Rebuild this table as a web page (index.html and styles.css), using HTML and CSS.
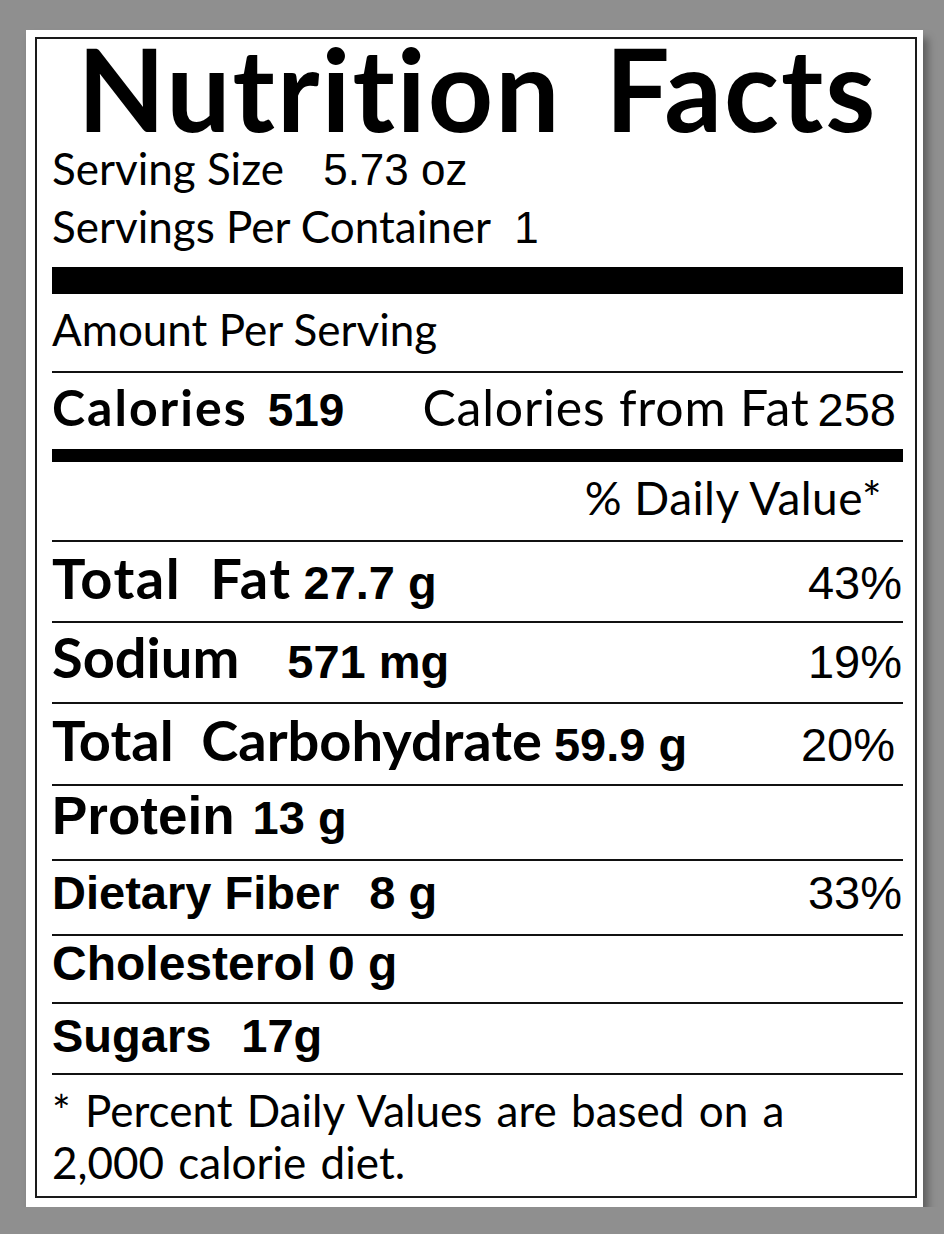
FILE: index.html
```html
<!DOCTYPE html>
<html>
<head>
    <title>Nutrition Facts</title>
    <link rel="stylesheet" href="styles.css">
</head>
<body>
    <div class="card">
        <div class="label">
            <h1 class="title">Nutrition Facts</h1>
            <div class="serving">Serving Size <span class="num serving-size">5.73 oz</span></div>
            <div class="serving">Servings Per Container <span class="num per-container">1</span></div>

            <div class="bar bar-thick"></div>

            <div class="amount">Amount Per Serving</div>

            <div class="calories">
                <div><span class="lbl-bold">Calories</span><span class="num-bold">519</span></div>
                <div class="cal-fat">Calories from Fat<span class="num">258</span></div>
            </div>

            <div class="bar bar-mid"></div>

            <div class="dv-head">% Daily Value*</div>

            <div class="row row-fat">
                <div><span class="lbl lbl-wide">Total Fat</span><span class="amt gap-s">27.7 g</span></div>
                <div class="pct">43%</div>
            </div>
            <div class="row row-sodium">
                <div><span class="lbl">Sodium</span><span class="amt gap-xl">571 mg</span></div>
                <div class="pct">19%</div>
            </div>
            <div class="row row-carb">
                <div><span class="lbl">Total Carbohydrate</span><span class="amt gap-s">59.9 g</span></div>
                <div class="pct pct-inset">20%</div>
            </div>
            <div class="row row-protein">
                <div><span class="amt amt-big">Protein</span><span class="amt gap-m">13 g</span></div>
            </div>
            <div class="row row-fiber">
                <div><span class="amt">Dietary Fiber</span><span class="amt gap-l">8 g</span></div>
                <div class="pct">33%</div>
            </div>
            <div class="row row-chol">
                <div><span class="amt amt-wide">Cholesterol</span><span class="amt amt-wide gap-s">0 g</span></div>
            </div>
            <div class="row row-sugar">
                <div><span class="amt">Sugars</span><span class="amt gap-l">17g</span></div>
            </div>

            <div class="footnote">
                * Percent Daily Values are based on a<br>
                2,000 calorie diet.
            </div>
        </div>
    </div>
</body>
</html>
```

FILE: styles.css
```css
body {
    margin: 0;
    background: #8f8f8f;
    font-family: Lato, "Open Sans", sans-serif;
    color: #000;
}
.card {
    width: 897px;
    height: 1177px;
    margin: 30px 0 0 26px;
    padding: 7px 6px 9px 9px;
    box-sizing: border-box;
    background: #fff;
    box-shadow: 5px 8px 8px rgba(0,0,0,0.35);
}
.label {
    height: 100%;
    box-sizing: border-box;
    border: 2px solid #1a1a1a;
    padding: 0 12px 0 15px;
}
.title {
    margin: -4px 0 0;
    font-size: 114px;
    line-height: 105px;
    font-weight: 700;
    text-align: center;
    letter-spacing: 2px;
    word-spacing: 14px;
}
.serving {
    font-size: 44px;
    line-height: 56px;
}
.num {
    font-family: "Liberation Sans", Arial, sans-serif;
}
.serving-size { font-size: 44px; margin-left: 28px; }
.per-container { font-size: 44px; margin-left: 13px; }
.num-bold {
    font-family: "Liberation Sans", Arial, sans-serif;
    font-weight: 700;
    font-size: 46px;
    margin-left: 20px;
}
.bar { background: #000; }
.bar-thick { height: 27px; margin-top: 11px; }
.bar-mid { height: 13px; }
.amount {
    font-size: 44px;
    line-height: 52px;
    padding-top: 9px;
    height: 68px;
}
.calories {
    display: flex;
    justify-content: space-between;
    align-items: baseline;
    border-top: 2px solid #111;
    height: 78px;
    box-sizing: border-box;
    padding: 6px 7px 0 0;
    font-size: 46px;
    line-height: 56px;
}
.lbl-bold {
    font-weight: 700;
    font-size: 50px;
    letter-spacing: 2px;
}
.cal-fat {
    font-size: 50px;
    letter-spacing: 0.8px;
}
.cal-fat .num { font-size: 47px; margin-left: 8px; letter-spacing: 0; }
.dv-head {
    height: 78px;
    box-sizing: border-box;
    padding: 10px 21px 0 0;
    text-align: right;
    font-size: 46px;
    line-height: 52px;
    letter-spacing: 0.5px;
}
.row {
    display: flex;
    justify-content: space-between;
    align-items: baseline;
    border-top: 2px solid #111;
    box-sizing: border-box;
    line-height: 56px;
    padding-right: 1px;
}
.lbl {
    font-weight: 700;
    font-size: 56px;
    word-spacing: 14px;
}
.lbl-wide { letter-spacing: 1.5px; }
.amt {
    font-family: "Liberation Sans", Arial, sans-serif;
    font-weight: 700;
    font-size: 47px;
}
.amt-big { font-size: 53px; }
.amt-wide { font-size: 48px; }
.gap-s { margin-left: 12px; }
.gap-m { margin-left: 18px; }
.gap-l { margin-left: 30px; }
.gap-xl { margin-left: 48px; }
.pct {
    font-family: "Liberation Sans", Arial, sans-serif;
    font-size: 47px;
}
.pct-inset { margin-right: 7px; }
.row-fat { height: 81px; padding-top: 8px; }
.row-sodium { height: 81px; padding-top: 6px; }
.row-carb { height: 82px; padding-top: 8px; }
.row-protein { height: 75px; padding-top: 2px; }
.row-fiber { height: 75px; padding-top: 4px; }
.row-chol { height: 68px; padding-top: 0; }
.row-sugar { height: 71px; padding-top: 4px; }
.footnote {
    border-top: 2px solid #111;
    padding-top: 9px;
    font-size: 44px;
    line-height: 52px;
    word-spacing: 3px;
}
```
